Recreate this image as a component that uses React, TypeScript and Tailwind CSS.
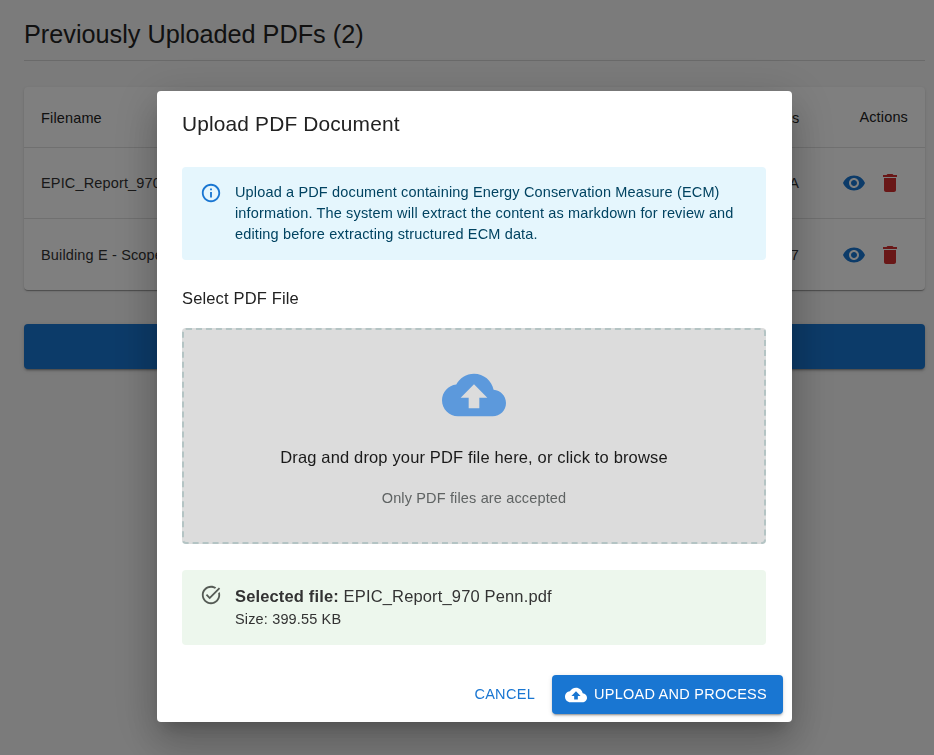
const cloud = "M19.35 10.04C18.67 6.59 15.64 4 12 4 9.11 4 6.6 5.64 5.35 8.04 2.34 8.36 0 10.91 0 14c0 3.31 2.69 6 6 6h13c2.76 0 5-2.24 5-5 0-2.64-2.05-4.78-4.65-4.96zM14 13v4h-4v-4H7l5-5 5 5h-3z";
const eye = "M12 4.5C7 4.5 2.73 7.61 1 12c1.73 4.39 6 7.5 11 7.5s9.27-3.11 11-7.5c-1.73-4.39-6-7.5-11-7.5zM12 17c-2.76 0-5-2.24-5-5s2.24-5 5-5 5 2.24 5 5-2.24 5-5 5zm0-8c-1.66 0-3 1.34-3 3s1.34 3 3 3 3-1.34 3-3-1.34-3-3-3z";
const trash = "M6 19c0 1.1.9 2 2 2h8c1.1 0 2-.9 2-2V7H6v12zM19 4h-3.5l-1-1h-5l-1 1H5v2h14V4z";
const info = "M11 7h2v2h-2zm0 4h2v6h-2zm1-9C6.48 2 2 6.48 2 12s4.48 10 10 10 10-4.48 10-10S17.52 2 12 2zm0 18c-4.41 0-8-3.59-8-8s3.59-8 8-8 8 3.59 8 8-3.59 8-8 8z";
const task = "M22 5.18 10.59 16.6l-4.24-4.24 1.41-1.41 2.83 2.83 10-10L22 5.18zm-2.21 5.04c.13.57.21 1.17.21 1.78 0 4.42-3.58 8-8 8s-8-3.58-8-8 3.58-8 8-8c1.58 0 3.04.46 4.28 1.25l1.44-1.44C16.1 2.67 14.13 2 12 2 6.48 2 2 6.48 2 12s4.48 10 10 10 10-4.48 10-10c0-1.19-.22-2.33-.6-3.39l-1.61 1.61z";

function Icon({ d, className }: { d: string; className: string }) {
  return (
    <svg viewBox="0 0 24 24" className={className} fill="currentColor" aria-hidden="true">
      <path d={d} />
    </svg>
  );
}

function Row({ name, status, last }: { name: string; status: string; last?: boolean }) {
  return (
    <div className={`flex h-[71px] items-center justify-between pl-[17px] pr-[23px] text-[14.5px] tracking-[0.15px] text-[#333333] ${last ? "" : "border-b border-[#e0e0e0]"}`}>
      <span className="mt-[2px]">{name}</span>
      <div className="flex items-center">
        <span className="mr-[43px] mt-[2px]">{status}</span>
        <Icon d={eye} className="mr-[12px] h-6 w-6 text-[#1976d2]" />
        <Icon d={trash} className="h-6 w-6 text-[#d32f2f]" />
      </div>
    </div>
  );
}

export default function App() {
  return (
    <div className="relative h-[755px] w-[934px] overflow-hidden bg-[#f6f6f6] font-['Liberation_Sans',Arial,sans-serif]">
      <div className="pl-6 pr-[9px] pt-[18px]">
        <h1 className="border-b border-[#d4d4d4] pb-[10px] text-[25.25px] leading-[32px] text-[#222222]">Previously Uploaded PDFs (2)</h1>
        <div className="mt-[26px] overflow-hidden rounded bg-white shadow-[0_2px_1px_-1px_rgba(0,0,0,0.2),0_1px_1px_0_rgba(0,0,0,0.14),0_1px_3px_0_rgba(0,0,0,0.12)]">
          <div className="flex h-[61px] items-center justify-between border-b border-[#e0e0e0] pl-[17px] pr-[17px] text-[14.5px] tracking-[0.15px] text-[#222222]">
            <span className="mt-[4px]">Filename</span>
            <div className="mt-[2px] flex items-center">
              <span className="mr-[60px] mt-[2px]">Status</span>
              <span>Actions</span>
            </div>
          </div>
          <Row name="EPIC_Report_970 Penn.pdf" status="N/A" />
          <Row name="Building E - Scope.pdf" status="7" last />
        </div>
        <div className="mt-[34px] h-[45px] rounded bg-[#1976d2] shadow-[0_3px_1px_-2px_rgba(0,0,0,0.2),0_2px_2px_0_rgba(0,0,0,0.14),0_1px_5px_0_rgba(0,0,0,0.12)]" />
      </div>

      <div className="fixed inset-0 flex items-start justify-center bg-black/50 pl-[15px] pt-[91px]">
        <div className="flex h-[631px] w-[635px] flex-col rounded bg-white pl-[25px] pr-[26px] shadow-[0_11px_15px_-7px_rgba(0,0,0,0.2),0_24px_38px_3px_rgba(0,0,0,0.14),0_9px_46px_8px_rgba(0,0,0,0.12)]">
          <h2 className="pt-[19px] text-[20.9px] leading-[28px] tracking-[0.15px] text-[#222222]">Upload PDF Document</h2>

          <div className="mt-[29px] flex h-[93px] rounded bg-[#e5f6fd] pl-[18px] pr-[16px] pt-[15px] text-[14.5px] leading-[21px] tracking-[0.15px] text-[#014361]">
            <Icon d={info} className="mr-[13px] h-[22px] w-[22px] shrink-0 text-[#1976d2]" />
            <p>Upload a PDF document containing Energy Conservation Measure (ECM) information. The system will extract the content as markdown for review and editing before extracting structured ECM data.</p>
          </div>

          <p className="mt-[28px] text-[16.5px] leading-[20px] tracking-[0.15px] text-[#222222]">Select PDF File</p>

          <div className="mt-[20px] flex h-[216px] flex-col items-center rounded border-2 border-dashed border-[#b4c4c4] bg-[#dcdcdc]">
            <Icon d={cloud} className="mt-[33px] h-[64px] w-[64px] text-[#5c99dc]" />
            <p className="mt-[18px] text-[16.5px] leading-[24px] tracking-[0.15px] text-[#1a1a1a]">Drag and drop your PDF file here, or click to browse</p>
            <p className="mt-[19px] text-[14.5px] leading-[20px] tracking-[0.15px] text-[#5f6363]">Only PDF files are accepted</p>
          </div>

          <div className="mt-[26px] flex h-[75px] rounded bg-[#edf7ed] pl-[18px] pt-[14px]">
            <Icon d={task} className="mr-[13px] h-[22px] w-[22px] shrink-0 text-[#555b55]" />
            <div className="text-[#333333]">
              <p className="text-[16.5px] leading-[24px] tracking-[0.15px]"><strong className="font-bold">Selected file:</strong> EPIC_Report_970 Penn.pdf</p>
              <p className="mt-[2px] text-[14.5px] leading-[18px] tracking-[0.15px]">Size: 399.55 KB</p>
            </div>
          </div>

          <div className="-mr-[17px] mt-[30px] flex items-center justify-end">
            <span className="mr-[17px] text-[14.5px] tracking-[0.3px] text-[#1976d2]">CANCEL</span>
            <button className="flex h-[39px] w-[231px] items-center rounded bg-[#1976d2] pl-[13px] text-[14.5px] tracking-[0.25px] text-white shadow-[0_3px_1px_-2px_rgba(0,0,0,0.2),0_2px_2px_0_rgba(0,0,0,0.14),0_1px_5px_0_rgba(0,0,0,0.12)]">
              <Icon d={cloud} className="mr-[7px] h-[22px] w-[22px]" />
              UPLOAD AND PROCESS
            </button>
          </div>
        </div>
      </div>
    </div>
  );
}
